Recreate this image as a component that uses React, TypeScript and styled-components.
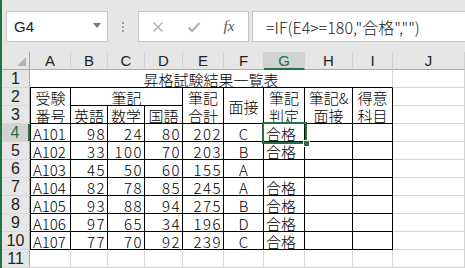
import styled, { createGlobalStyle } from 'styled-components'

const GlobalStyle = createGlobalStyle`
  html, body {
    margin: 0;
    padding: 0;
    background: #fff;
  }
  body {
    font-family: "Noto Sans CJK JP", sans-serif;
  }
`

const GREEN = '#217346'
const GRID = '#d4d4d4'
const INK = '#000'

const Window = styled.div`
  width: 465px;
  height: 268px;
  overflow: hidden;
  box-sizing: border-box;
  border-left: 2px solid ${GREEN};
  background: #fff;
`

const FormulaBar = styled.div`
  height: 52px;
  box-sizing: border-box;
  background: #e6e6e6;
  display: flex;
  align-items: flex-start;
  padding: 11px 0 0 4px;
`

const NameBox = styled.div`
  width: 102px;
  height: 31px;
  box-sizing: border-box;
  background: #fff;
  border: 1px solid #c6c6c6;
  display: flex;
  align-items: center;
  justify-content: space-between;
  padding: 0 6px 0 7px;
  font-family: "Liberation Sans", sans-serif;
  font-size: 15px;
  color: #222;
`

const DropArrow = styled.span`
  width: 0;
  height: 0;
  border-left: 4px solid transparent;
  border-right: 4px solid transparent;
  border-top: 5px solid #777;
  margin-top: -3px;
`

const Grip = styled.div`
  width: 30px;
  height: 31px;
  display: flex;
  flex-direction: column;
  align-items: center;
  justify-content: center;
  gap: 2px;
  span {
    width: 2px;
    height: 2px;
    background: #a0a0a0;
  }
`

const IconBox = styled.div`
  width: 111px;
  height: 31px;
  box-sizing: border-box;
  background: #fff;
  border: 1px solid #c6c6c6;
  display: flex;
  align-items: center;
  padding-left: 12px;
`

const IconSlot = styled.span<{ $w: number }>`
  width: ${({ $w }) => $w}px;
  display: flex;
  justify-content: center;
  align-items: center;
`

const Fx = styled.span`
  font-family: "Liberation Serif", serif;
  font-style: italic;
  font-size: 15px;
  color: #555;
`

const FormulaInput = styled.div`
  flex: 1;
  height: 31px;
  margin-left: 3px;
  margin-right: -2px;
  box-sizing: border-box;
  background: #fff;
  border: 1px solid #c6c6c6;
  display: flex;
  align-items: center;
  padding-left: 13px;
  font-size: 16px;
  font-weight: 300;
  color: #222;
  white-space: nowrap;
`

const Sheet = styled.div`
  display: grid;
  grid-template-columns: 28px 41px 37px 37px 38px 41px 40px 41px 48px 40px 72px;
  grid-template-rows: repeat(12, 18px);
`

const HeadCell = styled.div<{ $c: number; $r: number; $sel?: boolean; $side?: boolean }>`
  grid-column: ${({ $c }) => $c};
  grid-row: ${({ $r }) => $r};
  box-sizing: border-box;
  background: ${({ $sel }) => ($sel ? '#d2d2d2' : '#e6e6e6')};
  color: ${({ $sel }) => ($sel ? GREEN : '#222')};
  display: flex;
  align-items: center;
  justify-content: center;
  font-size: ${({ $side }) => ($side ? 16 : 15)}px;
  font-family: "Liberation Sans", sans-serif;
  border-right: ${({ $side, $sel }) =>
    $side ? ($sel ? `2px solid ${GREEN}` : '1px solid #ababab') : '1px solid #d0d0d0'};
  border-bottom: ${({ $side, $sel }) =>
    $side ? '1px solid #d8d8d8' : $sel ? `2px solid ${GREEN}` : '1px solid #ababab'};
`

const Corner = styled.div`
  grid-column: 1;
  grid-row: 1;
  box-sizing: border-box;
  background: #e6e6e6;
  border-right: 1px solid #ababab;
  border-bottom: 1px solid #ababab;
  position: relative;
  &::after {
    content: "";
    position: absolute;
    right: 3px;
    bottom: 3px;
    border-left: 9px solid transparent;
    border-bottom: 9px solid #b4b4b4;
  }
`

type Align = 'left' | 'center' | 'right'

const Cell = styled.div<{
  $c: number
  $r: number
  $cs?: number
  $rs?: number
  $align?: Align
  $num?: boolean
  $rb?: string
  $bb?: string
  $lb?: string
}>`
  grid-column: ${({ $c, $cs }) => `${$c} / span ${$cs ?? 1}`};
  grid-row: ${({ $r, $rs }) => `${$r} / span ${$rs ?? 1}`};
  box-sizing: border-box;
  border-right: 1px solid ${({ $rb }) => $rb ?? GRID};
  border-bottom: 1px solid ${({ $bb }) => $bb ?? GRID};
  border-left: ${({ $lb }) => ($lb ? `1px solid ${$lb}` : 'none')};
  display: flex;
  flex-direction: column;
  justify-content: center;
  align-items: ${({ $align }) =>
    $align === 'right' ? 'flex-end' : $align === 'center' ? 'center' : 'flex-start'};
  padding-top: 3px;
  padding-right: ${({ $align }) => ($align === 'right' ? 1 : 0)}px;
  padding-left: ${({ $align }) => ($align === 'left' ? 2 : 0)}px;
  font-size: 15px;
  font-weight: 300;
  letter-spacing: ${({ $num }) => ($num ? '1.5px' : '0')};
  line-height: 18px;
  color: ${INK};
  white-space: nowrap;
  overflow: visible;
`

const Selection = styled.div`
  grid-column: 8;
  grid-row: 5;
  margin: -2px;
  border: 2px solid ${GREEN};
  position: relative;
  z-index: 2;
  pointer-events: none;
  &::after {
    content: "";
    position: absolute;
    right: -5px;
    bottom: -5px;
    width: 5px;
    height: 5px;
    background: ${GREEN};
    border: 1px solid #fff;
  }
`

const letters = ['A', 'B', 'C', 'D', 'E', 'F', 'G', 'H', 'I', 'J']

const rows: [string, number, number, number, number, string, string][] = [
  ['A101', 98, 24, 80, 202, 'C', '合格'],
  ['A102', 33, 100, 70, 203, 'B', '合格'],
  ['A103', 45, 50, 60, 155, 'A', ''],
  ['A104', 82, 78, 85, 245, 'A', '合格'],
  ['A105', 93, 88, 94, 275, 'B', '合格'],
  ['A106', 97, 65, 34, 196, 'D', '合格'],
  ['A107', 77, 70, 92, 239, 'C', '合格'],
]

const heads: [number, string[]][] = [
  [2, ['受験', '番号']],
  [6, ['筆記', '合計']],
  [7, ['面接']],
  [8, ['筆記', '判定']],
  [9, ['筆記&', '面接']],
  [10, ['得意', '科目']],
]

export default function App() {
  return (
    <Window>
      <GlobalStyle />
      <FormulaBar>
        <NameBox>
          G4
          <DropArrow />
        </NameBox>
        <Grip>
          <span />
          <span />
          <span />
        </Grip>
        <IconBox>
          <IconSlot $w={14}>
            <svg width="12" height="12" viewBox="0 0 12 12">
              <path d="M1.5 1.5 L10.5 10.5 M10.5 1.5 L1.5 10.5" stroke="#b0b0b0" strokeWidth="1.4" fill="none" />
            </svg>
          </IconSlot>
          <IconSlot $w={22} />
          <IconSlot $w={14}>
            <svg width="14" height="12" viewBox="0 0 14 12">
              <path d="M1.5 6.5 L5 10 L12.5 2" stroke="#b0b0b0" strokeWidth="2" fill="none" />
            </svg>
          </IconSlot>
          <IconSlot $w={20} />
          <IconSlot $w={16}>
            <Fx>fx</Fx>
          </IconSlot>
        </IconBox>
        <FormulaInput>=IF(E4&gt;=180,"合格","")</FormulaInput>
      </FormulaBar>

      <Sheet>
        <Corner />
        {letters.map((l, i) => (
          <HeadCell key={l} $c={i + 2} $r={1} $sel={l === 'G'}>
            {l}
          </HeadCell>
        ))}
        {Array.from({ length: 11 }, (_, i) => (
          <HeadCell key={i} $c={1} $r={i + 2} $side $sel={i === 3}>
            {i + 1}
          </HeadCell>
        ))}

        {/* row 1: title merged over A:I */}
        <Cell $c={2} $r={2} $cs={9} $align="center" $bb={INK}>
          昇格試験結果一覧表
        </Cell>
        <Cell $c={11} $r={2} />

        {/* rows 2-3: headings */}
        {heads.map(([c, lines]) => (
          <Cell key={c} $c={c} $r={3} $rs={2} $align="center" $rb={INK} $bb={INK} $lb={c === 2 ? INK : undefined}>
            {lines.map((t) => (
              <span key={t}>{t}</span>
            ))}
          </Cell>
        ))}
        <Cell $c={3} $r={3} $cs={3} $align="center" $rb={INK} $bb={INK}>
          筆記
        </Cell>
        {['英語', '数学', '国語'].map((t, i) => (
          <Cell key={t} $c={i + 3} $r={4} $align="center" $rb={INK} $bb={INK}>
            {t}
          </Cell>
        ))}
        <Cell $c={11} $r={3} />
        <Cell $c={11} $r={4} />

        {/* data rows 4-10 */}
        {rows.map((row, i) => {
          const r = i + 5
          return [
            <Cell key={`a${r}`} $c={2} $r={r} $align="left" $rb={INK} $bb={INK} $lb={INK}>
              {row[0]}
            </Cell>,
            ...[row[1], row[2], row[3], row[4]].map((n, j) => (
              <Cell key={`n${r}${j}`} $c={j + 3} $r={r} $align="right" $num $rb={INK} $bb={INK}>
                {n}
              </Cell>
            )),
            <Cell key={`f${r}`} $c={7} $r={r} $align="center" $rb={INK} $bb={INK}>
              {row[5]}
            </Cell>,
            <Cell key={`g${r}`} $c={8} $r={r} $align="left" $rb={INK} $bb={INK}>
              {row[6]}
            </Cell>,
            <Cell key={`h${r}`} $c={9} $r={r} $rb={INK} $bb={INK} />,
            <Cell key={`i${r}`} $c={10} $r={r} $rb={INK} $bb={INK} />,
            <Cell key={`j${r}`} $c={11} $r={r} />,
          ]
        })}

        {/* row 11: empty */}
        {Array.from({ length: 10 }, (_, i) => (
          <Cell key={`e${i}`} $c={i + 2} $r={12} />
        ))}

        <Selection />
      </Sheet>
    </Window>
  )
}
